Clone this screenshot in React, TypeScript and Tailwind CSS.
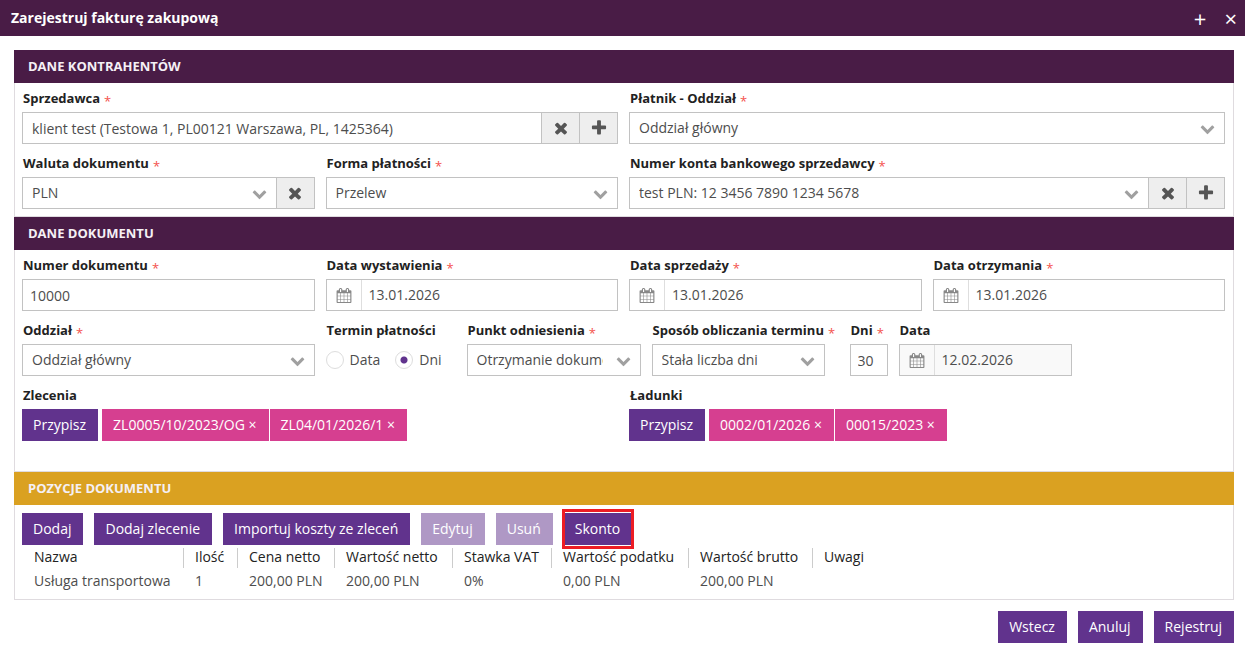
import React, { useState } from "react";
import clsx from "clsx";

const icons = {
  times:
    "M1490 1322q0 40-28 68l-136 136q-28 28-68 28t-68-28l-294-294-294 294q-28 28-68 28t-68-28l-136-136q-28-28-28-68t28-68l294-294-294-294q-28-28-28-68t28-68l136-136q28-28 68-28t68 28l294 294 294-294q28-28 68-28t68 28l136 136q28 28 28 68t-28 68l-294 294 294 294q28 28 28 68z",
  plus: "M1600 736v192q0 40-28 68t-68 28h-416v416q0 40-28 68t-68 28h-192q-40 0-68-28t-28-68v-416h-416q-40 0-68-28t-28-68v-192q0-40 28-68t68-28h416v-416q0-40 28-68t68-28h192q40 0 68 28t28 68v416h416q40 0 68 28t28 68z",
  chevron:
    "M1683 808l-742 741q-19 19-45 19t-45-19l-742-741q-19-19-19-45.5t19-45.5l166-165q19-19 45-19t45 19l531 531 531-531q19-19 45-19t45 19l166 165q19 19 19 45.5t-19 45.5z",
  calendar:
    "M192 1664h288v-288h-288v288zm352 0h320v-288h-320v288zm-352-352h288v-320h-288v320zm352 0h320v-320h-320v320zm-352-384h288v-288h-288v288zm736 736h320v-288h-320v288zm-384-736h320v-288h-320v288zm768 736h288v-288h-288v288zm-384-352h320v-320h-320v320zm-352-864v-288q0-13-9.5-22.5t-22.5-9.5h-64q-13 0-22.5 9.5t-9.5 22.5v288q0 13 9.5 22.5t22.5 9.5h64q13 0 22.5-9.5t9.5-22.5zm736 864h288v-320h-288v320zm-384-384h320v-288h-320v288zm384 0h288v-288h-288v288zm32-480v-288q0-13-9.5-22.5t-22.5-9.5h-64q-13 0-22.5 9.5t-9.5 22.5v288q0 13 9.5 22.5t22.5 9.5h64q13 0 22.5-9.5t9.5-22.5zm384-64v1280q0 52-38 90t-90 38h-1408q-52 0-90-38t-38-90v-1280q0-52 38-90t90-38h128v-96q0-66 47-113t113-47h64q66 0 113 47t47 113v96h384v-96q0-66 47-113t113-47h64q66 0 113 47t47 113v96h128q52 0 90 38t38 90z",
};

interface IIcon {
  name: keyof typeof icons;
  className?: string;
}
const Icon = ({ name, className }: IIcon) => (
  <svg
    viewBox="0 0 1792 1792"
    preserveAspectRatio="none"
    fill="currentColor"
    aria-hidden="true"
    className={className}
  >
    <path d={icons[name]} />
  </svg>
);

interface ISection {
  title: string;
  gold?: boolean;
  className?: string;
  children: React.ReactNode;
}
const Section = ({ title, gold, className, children }: ISection) => (
  <section>
    <h2
      className={clsx(
        "h-[33px] px-[14px] text-[13px] leading-[33px] font-bold uppercase text-[#f5f0f5]",
        gold ? "bg-[#daa121]" : "bg-[#491c46]"
      )}
    >
      {title}
    </h2>
    <div className={clsx("border border-t-0 border-[#dfdbdf] pr-2 pl-[7px]", className)}>
      {children}
    </div>
  </section>
);

interface IField {
  id?: string;
  label: string;
  required?: boolean;
  className?: string;
  children: React.ReactNode;
}
const Field = ({ id, label, required, className, children }: IField) => (
  <div className={className}>
    <label
      htmlFor={id}
      className="mb-1 block h-5 pl-px text-[13px] leading-5 font-bold whitespace-nowrap text-[#222]"
    >
      {label}
      {required && (
        <span className="ml-1 align-[-3px] leading-none font-normal text-[#f4524d]">*</span>
      )}
    </label>
    {children}
  </div>
);

interface IControl {
  id: string;
  value: string;
  className?: string;
}
const TextInput = ({ id, value, className = "px-[7px]" }: IControl) => (
  <input
    id={id}
    type="text"
    defaultValue={value}
    className={clsx("h-8 w-full min-w-0 border border-[#c2c2c2] bg-white text-sm", className)}
  />
);

const Select = ({ id, value, className }: IControl) => (
  <div className={clsx("relative min-w-0 grow", className)}>
    <select
      id={id}
      defaultValue={value}
      className="h-8 w-full appearance-none border border-[#c2c2c2] bg-white pr-[37px] pl-[9px] text-sm"
    >
      <option>{value}</option>
    </select>
    <Icon
      name="chevron"
      className="pointer-events-none absolute top-[9px] right-[10px] size-[15px] text-[#a0a0a0]"
    />
  </div>
);

interface IDateInput {
  id: string;
  value: string;
  disabled?: boolean;
}
const DateInput = ({ id, value, disabled }: IDateInput) => (
  <div
    className={clsx(
      "flex h-8 border border-[#c2c2c2]",
      disabled ? "bg-[#f9f9f9]" : "bg-white"
    )}
  >
    <span className="flex w-[35px] shrink-0 items-center justify-center border-r border-[#dedede]">
      <Icon name="calendar" className="h-[15px] w-4 text-[#888]" />
    </span>
    <input
      id={id}
      type="text"
      defaultValue={value}
      disabled={disabled}
      className="w-full min-w-0 px-[7px] text-sm"
    />
  </div>
);

const AddonButton = ({ icon, label }: { icon: "times" | "plus"; label: string }) => (
  <button
    type="button"
    aria-label={label}
    className="flex h-8 w-[38px] shrink-0 items-center justify-center border border-l-0 border-[#c2c2c2] bg-[#eee] text-[#555]"
  >
    <Icon name={icon} className="size-[18px]" />
  </button>
);

interface IButton {
  disabled?: boolean;
  className?: string;
  children: React.ReactNode;
}
const Button = ({ disabled, className, children }: IButton) => (
  <button
    type="button"
    disabled={disabled}
    className={clsx(
      "h-8 bg-[#61338d] pr-3 pl-[11px] text-sm whitespace-nowrap text-white disabled:opacity-50",
      className
    )}
  >
    {children}
  </button>
);

const Assigned = ({ label, items }: { label: string; items: string[] }) => (
  <Field label={label} className="col-span-2">
    <div className="flex">
      <Button className="mr-1">Przypisz</Button>
      <div className="flex gap-px">
        {items.map((item) => (
          <button
            key={item}
            type="button"
            className="h-8 bg-[#d63f90] pr-3 pl-[11px] text-sm whitespace-nowrap text-white"
          >
            {item} ×
          </button>
        ))}
      </div>
    </div>
  </Field>
);

const positions = [
  { title: "Nazwa", value: "Usługa transportowa", width: "w-[161px]" },
  { title: "Ilość", value: "1", width: "w-[54px]" },
  { title: "Cena netto", value: "200,00 PLN", width: "w-[97px]" },
  { title: "Wartość netto", value: "200,00 PLN", width: "w-[118px]" },
  { title: "Stawka VAT", value: "0%", width: "w-[99px]" },
  { title: "Wartość podatku", value: "0,00 PLN", width: "w-[137px]" },
  { title: "Wartość brutto", value: "200,00 PLN", width: "w-[124px]" },
  { title: "Uwagi", value: "", width: "" },
];

const App = () => {
  const [term, setTerm] = useState("Dni");

  return (
    <div className="min-h-screen bg-white font-['Open_Sans',sans-serif] text-sm text-[#4d4d4d]">
      <header className="flex h-9 items-center justify-between bg-[#491c46] pr-2 pl-[11px] text-white">
        <h1 className="text-sm font-bold">Zarejestruj fakturę zakupową</h1>
        <div className="flex gap-[18px] text-[22px] leading-5 font-medium">
          <button type="button" aria-label="Powiększ">
            +
          </button>
          <button type="button" aria-label="Zamknij">
            ×
          </button>
        </div>
      </header>

      <main className="pt-[14px] pr-[11px] pl-[14px]">
        <Section title="Dane kontrahentów" className="pt-[5px] pb-[7px]">
          <div className="grid grid-cols-4 gap-x-[11px] gap-y-[9px]">
            <Field id="seller" label="Sprzedawca" required className="col-span-2">
              <div className="flex">
                <TextInput
                  id="seller"
                  value="klient test (Testowa 1, PL00121 Warszawa, PL, 1425364)"
                  className="px-[9px]"
                />
                <AddonButton icon="times" label="Wyczyść sprzedawcę" />
                <AddonButton icon="plus" label="Dodaj sprzedawcę" />
              </div>
            </Field>
            <Field id="payer" label="Płatnik - Oddział" required className="col-span-2">
              <Select id="payer" value="Oddział główny" />
            </Field>
            <Field id="currency" label="Waluta dokumentu" required>
              <div className="flex">
                <Select id="currency" value="PLN" />
                <AddonButton icon="times" label="Wyczyść walutę" />
              </div>
            </Field>
            <Field id="payment" label="Forma płatności" required>
              <Select id="payment" value="Przelew" />
            </Field>
            <Field
              id="account"
              label="Numer konta bankowego sprzedawcy"
              required
              className="col-span-2"
            >
              <div className="flex">
                <Select id="account" value="test PLN: 12 3456 7890 1234 5678" />
                <AddonButton icon="times" label="Wyczyść konto" />
                <AddonButton icon="plus" label="Dodaj konto" />
              </div>
            </Field>
          </div>
        </Section>

        <Section title="Dane dokumentu" className="pt-[5px] pb-[30px]">
          <div className="grid grid-cols-4 gap-x-[11px] gap-y-[9px]">
            <Field id="number" label="Numer dokumentu" required>
              <TextInput id="number" value="10000" />
            </Field>
            <Field id="issued" label="Data wystawienia" required>
              <DateInput id="issued" value="13.01.2026" />
            </Field>
            <Field id="sold" label="Data sprzedaży" required>
              <DateInput id="sold" value="13.01.2026" />
            </Field>
            <Field id="received" label="Data otrzymania" required>
              <DateInput id="received" value="13.01.2026" />
            </Field>
            <Field id="branch" label="Oddział" required>
              <Select id="branch" value="Oddział główny" />
            </Field>
            <div className="col-span-3 flex gap-[11px]">
              <Field label="Termin płatności" className="w-[130px]">
                <div className="flex h-8 items-center gap-[15px]">
                  {["Data", "Dni"].map((option) => (
                    <label key={option} className="flex items-center gap-[6px]">
                      <input
                        type="radio"
                        name="term"
                        checked={term === option}
                        onChange={() => setTerm(option)}
                        className="size-[18px] appearance-none rounded-full border border-[#ddd] bg-white checked:bg-radial checked:from-[#61338d] checked:from-[3px] checked:to-white checked:to-[4px]"
                      />
                      {option}
                    </label>
                  ))}
                </div>
              </Field>
              <Field id="reference" label="Punkt odniesienia" required className="w-[174px]">
                <Select id="reference" value="Otrzymanie dokumentu" />
              </Field>
              <Field id="method" label="Sposób obliczania terminu" required className="w-[187px]">
                <Select id="method" value="Stała liczba dni" className="w-[173px]" />
              </Field>
              <Field id="days" label="Dni" required className="w-[38px]">
                <TextInput id="days" value="30" />
              </Field>
              <Field id="due" label="Data" className="w-[173px]">
                <DateInput id="due" value="12.02.2026" disabled />
              </Field>
            </div>
            <Assigned label="Zlecenia" items={["ZL0005/10/2023/OG", "ZL04/01/2026/1"]} />
            <Assigned label="Ładunki" items={["0002/01/2026", "00015/2023"]} />
          </div>
        </Section>

        <Section title="Pozycje dokumentu" gold className="pt-2 pb-[6px]">
          <div className="flex gap-[11px]">
            <Button>Dodaj</Button>
            <Button>Dodaj zlecenie</Button>
            <Button>Importuj koszty ze zleceń</Button>
            <Button disabled>Edytuj</Button>
            <Button disabled>Usuń</Button>
            <div className="relative">
              <Button>Skonto</Button>
              <span className="pointer-events-none absolute -inset-x-[2px] -inset-y-1 border-3 border-[#ed1c24]" />
            </div>
          </div>
          <table className="w-full table-fixed text-left whitespace-nowrap">
            <thead>
              <tr className="h-6">
                {positions.map(({ title, width }, i) => (
                  <th
                    key={title}
                    className={clsx("p-0 pt-[3px] align-top font-normal text-[#222]", width)}
                  >
                    <div
                      className={clsx(
                        "h-5 leading-[18px]",
                        i > 0 ? "border-l border-[#ccc] pl-[11px]" : "pl-3"
                      )}
                    >
                      {title}
                    </div>
                  </th>
                ))}
              </tr>
            </thead>
            <tbody>
              <tr className="h-6">
                {positions.map(({ title, value }) => (
                  <td key={title} className="p-0 pl-3 leading-6">
                    {value}
                  </td>
                ))}
              </tr>
            </tbody>
          </table>
        </Section>

        <footer className="flex justify-end gap-[11px] pt-[11px]">
          <Button>Wstecz</Button>
          <Button>Anuluj</Button>
          <Button>Rejestruj</Button>
        </footer>
      </main>
    </div>
  );
};

export default App;
